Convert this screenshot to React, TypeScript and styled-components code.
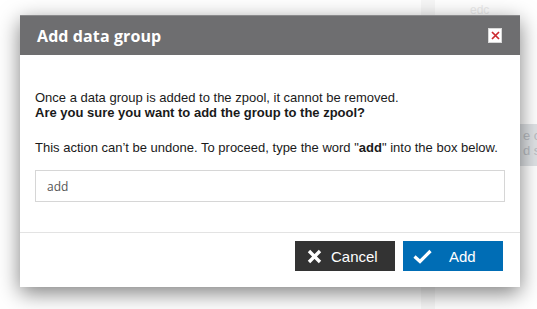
import React from 'react';
import styled, { createGlobalStyle } from 'styled-components';

const GlobalStyle = createGlobalStyle`
  html, body {
    margin: 0;
    padding: 0;
    background: #ffffff;
  }
  body {
    font-family: 'Liberation Sans', Arial, sans-serif;
  }
`;

const Page = styled.div`
  position: relative;
  width: 537px;
  height: 309px;
  overflow: hidden;
  background: #ffffff;
`;

// faint page content sitting behind the modal
const BackColumn = styled.div`
  position: absolute;
  left: 421px;
  top: 0;
  width: 14px;
  height: 309px;
  background: #f7f7f7;
`;

const BackPanel = styled.div`
  position: absolute;
  left: 519px;
  top: 124px;
  width: 18px;
  height: 42px;
  overflow: hidden;
  background: #dfe2e5;
  color: #b8bcc2;
  font-size: 13px;
  line-height: 15px;
  padding: 4px 0 0 4px;
  box-sizing: border-box;
  white-space: nowrap;
`;

const BackLabel = styled.div`
  position: absolute;
  left: 470px;
  top: 3px;
  color: #ececec;
  font-size: 12px;
`;

const Overlay = styled.div`
  position: absolute;
  inset: 0;
  padding: 15px 17px 0 20px;
  box-sizing: border-box;
`;

const Dialog = styled.div`
  width: 500px;
  height: 272px;
  background: #ffffff;
  display: flex;
  flex-direction: column;
  box-shadow: 0 6px 20px rgba(0, 0, 0, 0.5);
`;

const Header = styled.div`
  height: 40px;
  flex: 0 0 auto;
  background: #6e6e70;
  border-top: 1px solid #8a8a8c;
  box-sizing: border-box;
  display: flex;
  align-items: center;
  justify-content: space-between;
  padding: 0 18px 0 17px;
`;

const Title = styled.h2`
  margin: 0;
  color: #ffffff;
  font-family: 'Open Sans', 'Noto Sans', sans-serif;
  font-weight: 700;
  font-size: 16px;
  letter-spacing: 0.1px;
`;

const CloseBox = styled.button`
  width: 14px;
  height: 15px;
  padding: 0;
  border: 1px solid #d8d8d8;
  background: #ffffff;
  display: flex;
  align-items: center;
  justify-content: center;
`;

const Body = styled.div`
  padding: 35px 15px 30px 15px;
  color: #1a1a1a;
  font-size: 13px;
  line-height: 15px;
`;

const Para = styled.p<{ $gap?: number }>`
  margin: 0 0 ${({ $gap }) => $gap ?? 0}px 0;
`;

const ConfirmInput = styled.input`
  display: block;
  width: 470px;
  height: 32px;
  box-sizing: border-box;
  border: 1px solid #d6d6d6;
  padding: 0 11px;
  font-family: 'Open Sans', 'Noto Sans', sans-serif;
  font-size: 12px;
  color: #555555;
  caret-color: #222;
  outline: none;
`;

const Footer = styled.div`
  border-top: 1px solid #e3e3e3;
  display: flex;
  justify-content: flex-end;
  gap: 8px;
  padding: 8px 17px 16px 0;
`;

const Button = styled.button<{ $variant: 'dark' | 'primary'; $pad: number; $gap: number }>`
  width: 100px;
  height: 30px;
  border: none;
  display: flex;
  align-items: center;
  padding: 0 0 0 ${({ $pad }) => $pad}px;
  gap: ${({ $gap }) => $gap}px;
  background: ${({ $variant }) => ($variant === 'dark' ? '#333333' : '#006db5')};
  color: #ffffff;
  font-family: 'Liberation Sans', Arial, sans-serif;
  font-size: 15px;
  cursor: pointer;
`;

const Icon = styled.svg`
  display: block;
  flex: 0 0 auto;
`;

const App: React.FC = () => {
  return (
    <Page>
      <GlobalStyle />
      <BackColumn />
      <BackLabel>edc</BackLabel>
      <BackPanel>
        e c
        <br />d s
      </BackPanel>
      <Overlay>
        <Dialog>
          <Header>
            <Title>Add data group</Title>
            <CloseBox aria-label="Close">
              <Icon width="9" height="9" viewBox="0 0 9 9">
                <path d="M1 1 L8 8 M8 1 L1 8" stroke="#cc2a2f" strokeWidth="1.7" />
              </Icon>
            </CloseBox>
          </Header>
          <Body>
            <Para>Once a data group is added to the zpool, it cannot be removed.</Para>
            <Para $gap={20}>
              <b>Are you sure you want to add the group to the zpool?</b>
            </Para>
            <Para $gap={15}>
              This action can’t be undone. To proceed, type the word "<b>add</b>" into the box below.
            </Para>
            <ConfirmInput defaultValue="add" autoFocus />
          </Body>
          <Footer>
            <Button $variant="dark" $pad={12} $gap={9}>
              <Icon width="15" height="15" viewBox="0 0 15 15">
                <path d="M2 2 L13 13 M13 2 L2 13" stroke="#ffffff" strokeWidth="3.4" />
              </Icon>
              Cancel
            </Button>
            <Button $variant="primary" $pad={10} $gap={17}>
              <Icon width="19" height="15" viewBox="0 0 19 15">
                <path d="M1.5 7.5 L7 12.5 L17.5 2" stroke="#ffffff" strokeWidth="3.2" fill="none" />
              </Icon>
              Add
            </Button>
          </Footer>
        </Dialog>
      </Overlay>
    </Page>
  );
};

export default App;
